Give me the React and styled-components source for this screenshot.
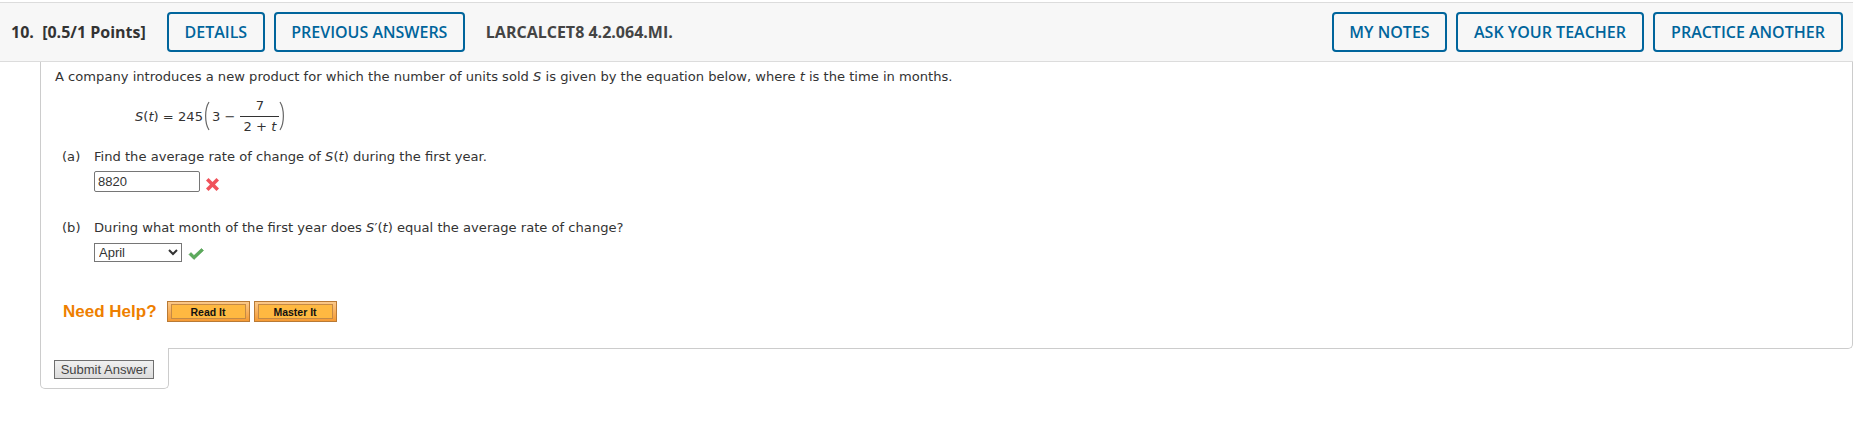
import React from "react";
import styled, { createGlobalStyle } from "styled-components";

const GlobalStyle = createGlobalStyle`
  html, body {
    margin: 0;
    background: #fff;
  }
`;

const Page = styled.div`
  padding: 2px 1px 0 0;
  height: 421px;
  overflow: hidden;
`;

const Header = styled.div`
  align-items: center;
  background: #f7f7f7;
  border-bottom: 1px solid #dcdcdc;
  border-top: 1px solid #dcdcdc;
  box-sizing: border-box;
  display: flex;
  font-family: "Open Sans", "Noto Sans", sans-serif;
  font-size: 16px;
  height: 60px;
  padding: 0 10px 0 11px;
`;

const Points = styled.div`
  color: #333;
  font-size: 16px;
  font-weight: 700;
  margin-right: 21px;
  white-space: pre;
`;

const HeaderButton = styled.button`
  background: #f7f7f7;
  border: 2px solid #00659c;
  border-radius: 4px;
  box-sizing: border-box;
  color: #00659c;
  font-family: inherit;
  font-size: 16px;
  font-weight: 600;
  height: 40px;
  margin-right: 9px;
  padding: 0;
  width: ${(props) => props.$width}px;

  &:last-child {
    margin-right: 0;
  }
`;

const Code = styled.div`
  color: #444;
  font-weight: 700;
  margin-left: 12px;
  margin-right: auto;
`;

const Card = styled.div`
  border: 1px solid #ccc;
  border-bottom-right-radius: 5px;
  border-top: 0;
  box-sizing: border-box;
  color: #333;
  font-family: "DejaVu Sans", Verdana, sans-serif;
  font-size: 13.1px;
  height: 287px;
  margin-left: 40px;
  padding: 6px 0 0 14px;
`;

const Line = styled.div`
  height: 18px;
  line-height: 18px;
`;

const Var = styled.i`
  font-style: italic;
`;

const Formula = styled.div`
  align-items: center;
  display: flex;
  height: 44px;
  margin: 8px 0 0 80px;
`;

const Paren = styled.svg`
  flex: none;
  height: 30px;
  margin-right: 2px;
  width: 7px;
`;

const Fraction = styled.div`
  display: inline-flex;
  flex-direction: column;
  margin-left: 5px;
  text-align: center;
  width: 39px;
`;

const Numerator = styled.div`
  border-bottom: 1px solid #333;
  height: 19px;
  line-height: 18px;
`;

const Denominator = styled.div`
  height: 19px;
  line-height: 20px;
`;

const Part = styled.div`
  display: grid;
  grid-template-columns: 32px auto;
  margin: ${(props) => props.$top}px 0 0 7px;
`;

const Label = styled.div`
  line-height: 18px;
`;

const Answer = styled.div`
  align-items: center;
  display: flex;
  font-family: "Liberation Sans", Arial, sans-serif;
  grid-column: 2;
  margin-top: ${(props) => props.$top}px;
`;

const TextField = styled.input`
  border: 1px solid #767676;
  border-radius: 2px;
  box-sizing: border-box;
  color: #333;
  font-family: inherit;
  font-size: 13px;
  height: 21px;
  padding: 0 3px;
  width: 106px;
`;

const Dropdown = styled.select`
  background: #fff;
  border: 1px solid #767676;
  border-radius: 0;
  box-sizing: border-box;
  color: #333;
  font-family: inherit;
  font-size: 13px;
  height: 19px;
  padding: 0;
  width: 88px;
`;

const MarkIcon = styled.svg`
  flex: none;
  margin-left: ${(props) => props.$left}px;
  margin-top: ${(props) => props.$top}px;
`;

const HelpRow = styled.div`
  align-items: center;
  display: flex;
  font-family: "Liberation Sans", Arial, sans-serif;
  height: 21px;
  margin: 39px 0 0 8px;
`;

const HelpLabel = styled.div`
  color: #ee7f00;
  font-size: 17px;
  font-weight: 700;
  margin-right: 10px;
`;

const HelpButton = styled.button`
  background: linear-gradient(#fbc98a, #f59a33);
  border: 1px solid #b97a35;
  box-sizing: border-box;
  font-family: inherit;
  height: 21px;
  margin-right: 4px;
  padding: 2px 3px;
  width: 83px;
`;

const HelpFace = styled.span`
  align-items: center;
  background: #ffb941;
  border: 1px solid #c58a45;
  box-sizing: border-box;
  color: #111;
  display: flex;
  font-size: 10.5px;
  font-weight: 700;
  height: 100%;
  justify-content: center;
  width: 100%;
`;

const SubmitTab = styled.div`
  background: #fff;
  border: 1px solid #ccc;
  border-radius: 0 0 5px 5px;
  border-top: 0;
  box-sizing: border-box;
  height: 41px;
  margin: -1px 0 0 40px;
  padding: 12px 0 0 13px;
  width: 129px;
`;

const SubmitButton = styled.button`
  background: linear-gradient(#f0f0f0, #dcdcdc);
  border: 1px solid #6f6f6f;
  box-sizing: border-box;
  color: #444;
  display: block;
  font-family: "Liberation Sans", Arial, sans-serif;
  font-size: 13px;
  height: 19px;
  padding: 0;
  width: 100px;
`;

const App = () => (
  <Page>
    <GlobalStyle />
    <Header>
      <Points>10.  [0.5/1 Points]</Points>
      <HeaderButton $width={98}>DETAILS</HeaderButton>
      <HeaderButton $width={191}>PREVIOUS ANSWERS</HeaderButton>
      <Code>LARCALCET8 4.2.064.MI.</Code>
      <HeaderButton $width={115}>MY NOTES</HeaderButton>
      <HeaderButton $width={188}>ASK YOUR TEACHER</HeaderButton>
      <HeaderButton $width={190}>PRACTICE ANOTHER</HeaderButton>
    </Header>
    <Card>
      <Line>
        A company introduces a new product for which the number of units sold{" "}
        <Var>S</Var> is given by the equation below, where <Var>t</Var> is the
        time in months.
      </Line>
      <Formula>
        <span>
          <Var>S</Var>(<Var>t</Var>) = 245
        </span>
        <Paren viewBox="0 0 7 30">
          <path d="M6 1C1.5 8 1.5 22 6 29" fill="none" stroke="#666" strokeWidth="1.2" />
        </Paren>
        <span>3 −</span>
        <Fraction>
          <Numerator>7</Numerator>
          <Denominator>
            2 + <Var>t</Var>
          </Denominator>
        </Fraction>
        <Paren viewBox="0 0 7 30">
          <path d="M1 1C5.5 8 5.5 22 1 29" fill="none" stroke="#666" strokeWidth="1.2" />
        </Paren>
      </Formula>
      <Part $top={10}>
        <Label>(a)</Label>
        <Label>
          Find the average rate of change of <Var>S</Var>(<Var>t</Var>) during
          the first year.
        </Label>
        <Answer $top={5}>
          <TextField readOnly value="8820" />
          <MarkIcon $left={5} $top={5} width="15" height="15" viewBox="0 0 15 15">
            <path
              d="M1 3.5 3.5 1 7.5 5 11.5 1 14 3.5 10 7.5 14 11.5 11.5 14 7.5 10 3.5 14 1 11.5 5 7.5Z"
              fill="#f0525a"
            />
          </MarkIcon>
        </Answer>
      </Part>
      <Part $top={27}>
        <Label>(b)</Label>
        <Label>
          During what month of the first year does <Var>S</Var>′(<Var>t</Var>)
          equal the average rate of change?
        </Label>
        <Answer $top={6}>
          <Dropdown defaultValue="April">
            <option>April</option>
          </Dropdown>
          <MarkIcon $left={6} $top={3} width="16" height="12" viewBox="0 0 16 12">
            <path d="M1 6.5 3 4.5 6 7.5 13.5 .5 15.5 2.5 6 11.5Z" fill="#5cab5c" stroke="#3f8f3f" strokeWidth=".5" />
          </MarkIcon>
        </Answer>
      </Part>
      <HelpRow>
        <HelpLabel>Need Help?</HelpLabel>
        <HelpButton>
          <HelpFace>Read It</HelpFace>
        </HelpButton>
        <HelpButton>
          <HelpFace>Master It</HelpFace>
        </HelpButton>
      </HelpRow>
    </Card>
    <SubmitTab>
      <SubmitButton>Submit Answer</SubmitButton>
    </SubmitTab>
  </Page>
);

export default App;
